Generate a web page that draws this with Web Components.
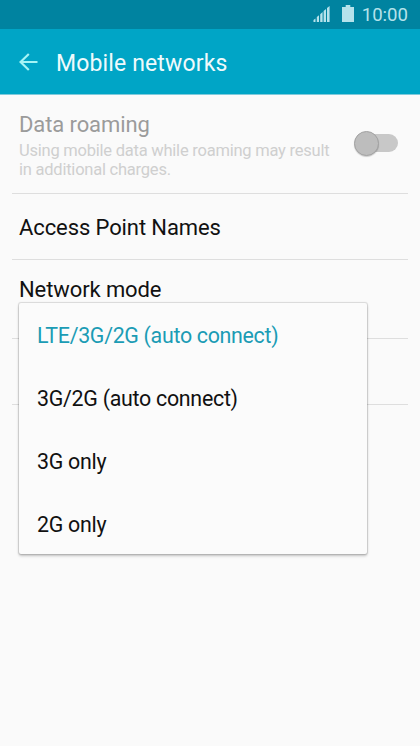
<!DOCTYPE html>
<html lang="en">
<head>
<meta charset="utf-8">
<meta name="viewport" content="width=device-width, initial-scale=1">
<title>Mobile networks</title>
<style>
    body {
        margin: 0;
        background: #fafafa;
        color: #111;
        font-family: Roboto, "Noto Sans", sans-serif;
    }
</style>
</head>
<body>
<settings-screen></settings-screen>

<script>
class StatusBar extends HTMLElement {
    connectedCallback() {
        this.attachShadow({ mode: 'open' });
        this.shadowRoot.innerHTML = `
            <style>
                :host {
                    display: flex;
                    justify-content: flex-end;
                    align-items: flex-start;
                    box-sizing: border-box;
                    height: 29px;
                    padding-right: 12px;
                    background: #0083a0;
                    color: #b5e2eb;
                    font-size: 18.6px;
                    line-height: 30px;
                }
                svg {
                    margin-top: 5px;
                }
                .signal {
                    margin-right: 12px;
                }
                .battery {
                    margin-right: 8px;
                }
            </style>
            <svg class="signal" width="17" height="18" viewBox="0 0 17 18" fill="currentColor">
                <path d="M.5 17v-2l2-1.5V17zM3.8 17v-5L6 10.2V17zM7.2 17V9.2L9.6 7v10zM10.6 17V6L13 4v13zM14 17V3l2.6-2v16z"/>
            </svg>
            <svg class="battery" width="12" height="18" viewBox="0 0 12 18" fill="currentColor">
                <path d="M3.7 0h4.6v2H12v15H0V2h3.7z"/>
            </svg>
            <span><slot></slot></span>
        `;
    }
}

class TitleBar extends HTMLElement {
    connectedCallback() {
        this.attachShadow({ mode: 'open' });
        this.shadowRoot.innerHTML = `
            <style>
                :host {
                    display: flex;
                    align-items: center;
                    box-sizing: border-box;
                    height: 66px;
                    padding: 0 19px;
                    background: #00a5c6;
                    border-bottom: 1px solid #7fcadb;
                    color: #effafc;
                    font-size: 23px;
                    letter-spacing: 0.14px;
                    line-height: 28px;
                }
                svg {
                    margin-right: 18px;
                    color: #a5f4f5;
                }
                span {
                    padding-top: 4px;
                }
            </style>
            <svg width="19" height="18" viewBox="0 0 19 18" fill="none" stroke="currentColor" stroke-width="2.2">
                <path d="M9.8 1L1.5 9l8.3 8M1.5 9h17"/>
            </svg>
            <span><slot></slot></span>
        `;
    }
}

class ToggleSwitch extends HTMLElement {
    connectedCallback() {
        this.attachShadow({ mode: 'open' });
        this.shadowRoot.innerHTML = `
            <style>
                :host {
                    display: flex;
                    align-items: center;
                    width: 44px;
                    height: 18px;
                    border-radius: 9px;
                    background: linear-gradient(to right, transparent 12px, #c8c8c8 12px);
                }
                i {
                    box-sizing: border-box;
                    width: 25px;
                    height: 25px;
                    border: 1px solid #a2a2a2;
                    border-radius: 50%;
                    background: #bdbdbd;
                    box-shadow: 0 1px 1px rgba(0, 0, 0, 0.18);
                }
            </style>
            <i></i>
        `;
    }
}

class SettingRow extends HTMLElement {
    connectedCallback() {
        this.attachShadow({ mode: 'open' });
        this.shadowRoot.innerHTML = `
            <style>
                :host {
                    display: flex;
                    justify-content: space-between;
                    box-sizing: border-box;
                    height: 66px;
                    margin: 0 12px;
                    padding: 21px 10px 0 7px;
                    border-bottom: 1px solid #dedede;
                    font-size: 22px;
                    letter-spacing: -0.1px;
                    line-height: 26px;
                }
                :host([disabled]) {
                    height: 99px;
                    padding-top: 17px;
                    color: #9b9b9b;
                }
                :host([open]) {
                    height: 79px;
                    padding-top: 17px;
                }
                .summary {
                    color: #cfcfcf;
                    font-size: 16.5px;
                    letter-spacing: -0.23px;
                    line-height: 19.3px;
                    padding-top: 3px;
                }
                .control {
                    padding-top: 22px;
                }
            </style>
            <div>
                <div class="title"><slot></slot></div>
                <div class="summary"><slot name="summary"></slot></div>
            </div>
            <div class="control"><slot name="control"></slot></div>
        `;
    }
}

class MenuItem extends HTMLElement {
    connectedCallback() {
        this.attachShadow({ mode: 'open' });
        this.shadowRoot.innerHTML = `
            <style>
                :host {
                    display: block;
                    height: 63px;
                    padding-left: 18px;
                    font-size: 21.4px;
                    letter-spacing: -0.28px;
                    line-height: 66px;
                }
                :host([selected]) {
                    color: #1b9cb5;
                    letter-spacing: -0.31px;
                }
            </style>
            <slot></slot>
        `;
    }
}

class DropdownMenu extends HTMLElement {
    connectedCallback() {
        this.attachShadow({ mode: 'open' });
        this.shadowRoot.innerHTML = `
            <style>
                :host {
                    display: block;
                    position: absolute;
                    top: 303px;
                    left: 19px;
                    width: 348px;
                    height: 251px;
                    border-radius: 2px;
                    background: #fbfbfb;
                    box-shadow: 0 0 1px 1px rgba(0, 0, 0, 0.13), 0 2px 3px rgba(0, 0, 0, 0.22);
                }
            </style>
            <slot></slot>
        `;
    }
}

class SettingsScreen extends HTMLElement {
    connectedCallback() {
        this.attachShadow({ mode: 'open' });
        this.shadowRoot.innerHTML = `
            <style>
                :host {
                    display: block;
                    position: relative;
                    height: 746px;
                    overflow: hidden;
                }
            </style>
            <status-bar>10:00</status-bar>
            <title-bar>Mobile networks</title-bar>
            <setting-row disabled>
                Data roaming
                <span slot="summary">Using mobile data while roaming may result<br>in additional charges.</span>
                <toggle-switch slot="control"></toggle-switch>
            </setting-row>
            <setting-row>Access Point Names</setting-row>
            <setting-row open>Network mode</setting-row>
            <setting-row></setting-row>
            <dropdown-menu>
                <menu-item selected>LTE/3G/2G (auto connect)</menu-item>
                <menu-item>3G/2G (auto connect)</menu-item>
                <menu-item>3G only</menu-item>
                <menu-item>2G only</menu-item>
            </dropdown-menu>
        `;
    }
}

customElements.define('status-bar', StatusBar);
customElements.define('title-bar', TitleBar);
customElements.define('toggle-switch', ToggleSwitch);
customElements.define('setting-row', SettingRow);
customElements.define('menu-item', MenuItem);
customElements.define('dropdown-menu', DropdownMenu);
customElements.define('settings-screen', SettingsScreen);
</script>
</body>
</html>
